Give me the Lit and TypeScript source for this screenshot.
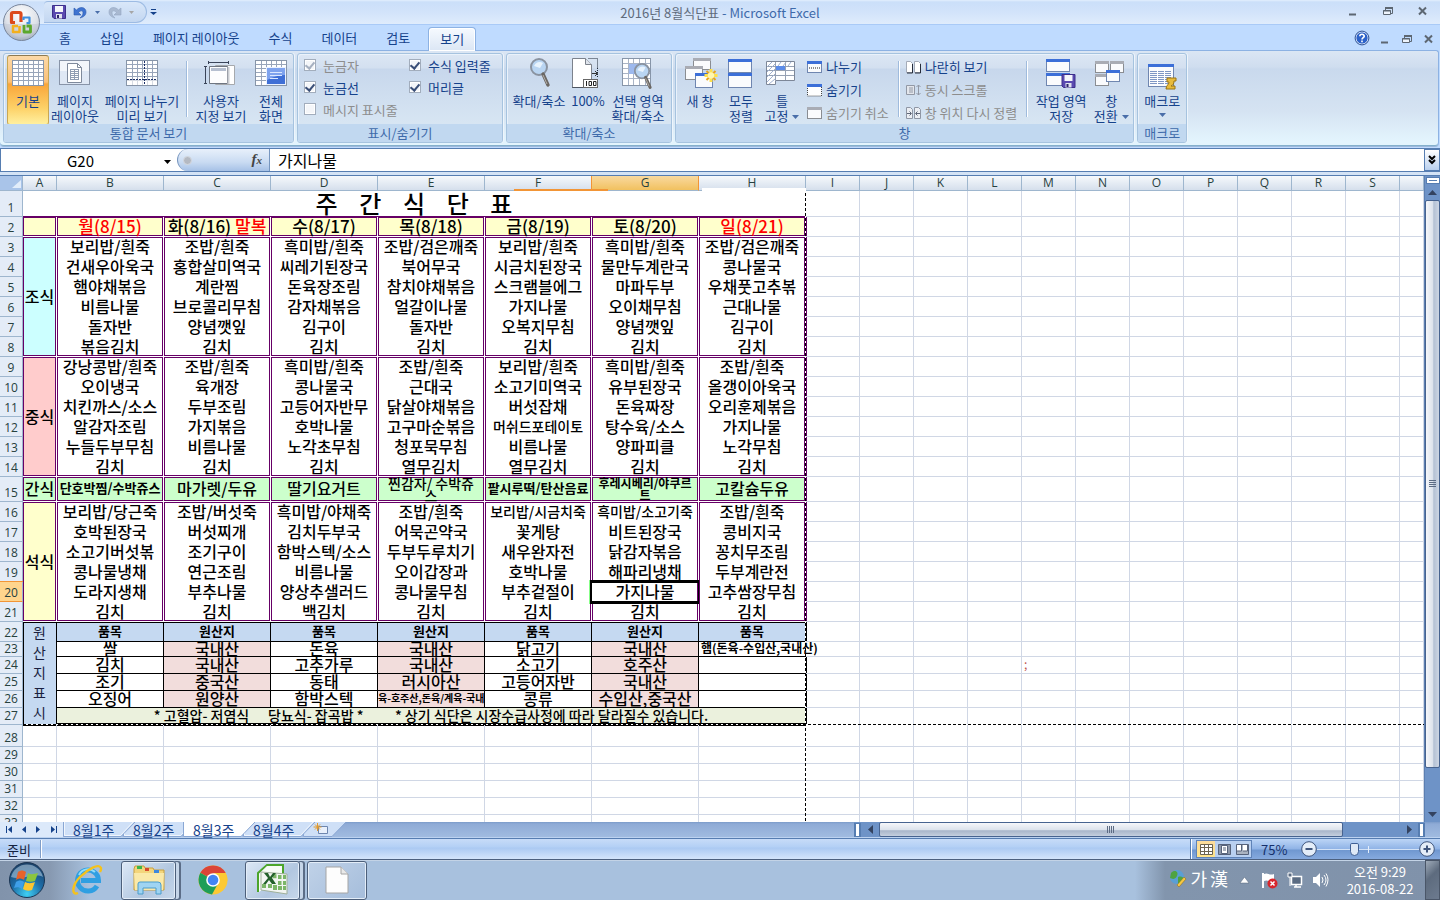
import { LitElement, html, svg, css, nothing, TemplateResult } from "lit";
import { customElement } from "lit/decorators.js";
import { classMap } from "lit/directives/class-map.js";

type Cell = { t: string; c?: string };

const HEAD_ROW: Cell[] = [
  { t: "월(8/15)", c: "red" }, { t: "화(8/16)" }, { t: "수(8/17)" }, { t: "목(8/18)" },
  { t: "금(8/19)" }, { t: "토(8/20)" }, { t: "일(8/21)", c: "red" },
];

const MEALS: { label: string; tone: string; first: number; rows: (string | Cell)[][] }[] = [
  {
    label: "조식", tone: "cyan", first: 3, rows: [
      ["보리밥/흰죽", "조밥/흰죽", "흑미밥/흰죽", "조밥/검은깨죽", "보리밥/흰죽", "흑미밥/흰죽", "조밥/검은깨죽"],
      ["건새우아욱국", "홍합살미역국", "씨레기된장국", "북어무국", "시금치된장국", "물만두계란국", "콩나물국"],
      ["햄야채볶음", "계란찜", "돈육장조림", "참치야채볶음", "스크램블에그", "마파두부", "우채풋고추볶"],
      ["비름나물", "브로콜리무침", "감자채볶음", "얼갈이나물", "가지나물", "오이채무침", "근대나물"],
      ["돌자반", "양념깻잎", "김구이", "돌자반", "오복지무침", "양념깻잎", "김구이"],
      ["볶음김치", "김치", "김치", "김치", "김치", "김치", "김치"],
    ],
  },
  {
    label: "중식", tone: "pink", first: 9, rows: [
      ["강낭콩밥/흰죽", "조밥/흰죽", "흑미밥/흰죽", "조밥/흰죽", "보리밥/흰죽", "흑미밥/흰죽", "조밥/흰죽"],
      ["오이냉국", "육개장", "콩나물국", "근대국", "소고기미역국", "유부된장국", "올갱이아욱국"],
      ["치킨까스/소스", "두부조림", "고등어자반무", "닭살야채볶음", "버섯잡채", "돈육짜장", "오리훈제볶음"],
      ["알감자조림", "가지볶음", "호박나물", "고구마순볶음", { t: "머쉬드포테이토", c: "s14" }, "탕수육/소스", "가지나물"],
      ["누들두부무침", "비름나물", "노각초무침", "청포묵무침", "비름나물", "양파피클", "노각무침"],
      ["김치", "김치", "김치", "열무김치", "열무김치", "김치", "김치"],
    ],
  },
  {
    label: "간식", tone: "green", first: 15, rows: [
      [{ t: "단호박찜/수박쥬스", c: "s13 bold" }, "마가렛/두유", "딸기요거트", { t: "찐감자/ 수박쥬스", c: "s14 two" },
        { t: "팥시루떡/탄산음료", c: "s13 bold" }, { t: "후레시베리/야쿠르트", c: "s12 bold two" }, "고칼슘두유"],
    ],
  },
  {
    label: "석식", tone: "yellow", first: 16, rows: [
      ["보리밥/당근죽", "조밥/버섯죽", "흑미밥/야채죽", "조밥/흰죽", { t: "보리밥/시금치죽", c: "s14" }, { t: "흑미밥/소고기죽", c: "s14" }, "조밥/흰죽"],
      ["호박된장국", "버섯찌개", "김치두부국", "어묵곤약국", "꽃게탕", "비트된장국", "콩비지국"],
      ["소고기버섯볶", "조기구이", "함박스텍/소스", "두부두루치기", "새우완자전", "닭감자볶음", "꽁치무조림"],
      ["콩나물냉채", "연근조림", "비름나물", "오이갑장과", "호박나물", "해파리냉채", "두부계란전"],
      ["도라지생채", "부추나물", "양상추샐러드", "콩나물무침", "부추겉절이", "가지나물", "고추쌈장무침"],
      ["김치", "김치", "백김치", "김치", "김치", "김치", "김치"],
    ],
  },
];

const ORIGINS: (string | Cell)[][] = [
  ["품목", "원산지", "품목", "원산지", "품목", "원산지", "품목"],
  ["쌀", "국내산", "돈육", "국내산", "닭고기", "국내산", { t: "햄(돈육-수입산,국내산)", c: "s12 bold spill" }],
  ["김치", "국내산", "고추가루", "국내산", "소고기", "호주산", ""],
  ["조기", "중국산", "동태", "러시아산", "고등어자반", "국내산", ""],
  ["오징어", "원양산", "함박스텍", { t: "육-호주산,돈육/계육-국내", c: "s10 bold" }, "콩류", "수입산,중국산", ""],
];

const tri = (c = "#4a6ea9") => html`<svg class="tri" width="7" height="4" viewBox="0 0 7 4"><path d="M0 0h7L3.5 4z" fill=${c} /></svg>`;

const lines = (xs: number[], ys: number[], x0: number, x1: number, y0: number, y1: number, c: string) =>
  svg`<path d=${xs.map((x) => `M${x} ${y0}V${y1}`).join("") + ys.map((y) => `M${x0} ${y}H${x1}`).join("")} stroke=${c} fill="none"/>`;

const gridPic = svg`<rect x=".5" y="2.5" width="31" height="25" fill="#fff" stroke="#8795a8"/>
  ${lines([6.5, 11.5, 16.5, 21.5, 26.5], [6.5, 10.5, 14.5, 18.5, 22.5], 1, 31, 3, 27, "#98a5ba")}`;
const win = (x: number, y: number, w: number, h: number, blue = true) => svg`
  <rect x=${x + 0.5} y=${y + 0.5} width=${w} height=${h} fill="#fafbfd" stroke=${blue ? "#6f86b0" : "#8a8d92"}/>
  <path d=${`M${x} ${y + 1.5}h${w + 1}`} stroke=${blue ? "#3c6fd8" : "#a9acb4"} stroke-width="3"/>`;
const lens = svg`<circle cx="10" cy="9" r="8" fill="#b9d5f2" stroke="#8a93a0" stroke-width="2"/>
  <path d="M5 8a6 6 0 0 1 9-3l-3 5z" fill="#e8f3fd"/><path d="M14 16l5 11" stroke="#6b6763" stroke-width="3.4" stroke-linecap="round"/><path d="M14 17l4 9" stroke="#b3aea8" stroke-width="1"/>`;
const floppy = svg`<path d="M.5 .5h13v13H2L.5 12z" fill="#5a4ab0" stroke="#3d2f8c"/><path d="M3 1h8v6H3z" fill="#f4f6fb"/><path d="M4 9h6v4.5H4z" fill="#dfe3ee"/><path d="M5 10h2v3H5z" fill="#2b2568"/>`;

const BIG: Record<string, TemplateResult> = {
  normal: svg`${gridPic}`,
  layout: svg`<rect x=".5" y="2.5" width="30" height="24" fill="#dfe8f5" stroke="#8894a8"/><path d="M1 3h29v10H1z" fill="#f3f6fb"/>
    <path d="M8.5 5.5h10l4 4v15h-14z" fill="#fff" stroke="#7f8a9c"/><path d="M18.5 5.5v4h4" fill="none" stroke="#7f8a9c"/>
    ${lines([11.5, 15.5, 19.5], [11.5, 13.5, 15.5, 17.5, 19.5, 21.5], 11, 20, 11, 22, "#8f9cb2")}`,
  breaks: svg`${gridPic}<rect x="1" y="22" width="30" height="5" fill="#fff" fill-opacity=".6"/><path d="M18.5 3v24" stroke="#1b2f66" stroke-dasharray="2 1"/><path d="M1 21.5h30" stroke="#1b2f66" stroke-dasharray="2 1"/>`,
  custom: svg`<path d="M10.5 7.5h19v19h-19z" fill="#fff" stroke="#a6a9ad"/><path d="M4.5 8.5h18v17h-18z" fill="#fdfdfe" stroke="#6e7581"/><path d="M6 10h15v3H6z" fill="#b6bfd0"/>
    <path d="M3 4.5h21M3.5 3v3M23.5 3v3M.5 8v17M-1 8.5h3M-1 25.5h3" stroke="#3a4459"/><path d="M23.5 26V9" stroke="#c9ccd1" stroke-width="2"/>`,
  full: svg`${gridPic}<rect x="11.5" y="9.5" width="19" height="17" fill="#3f6fd6" stroke="#e9f1ff"/><path d="M12 10h18v7c-7 0-12 2-18 5z" fill="#7fa3ee"/><path d="M15 14.5h12M15 17.5h12M15 20.5h8" stroke="#dce8ff"/>`,
  zoom: svg`<g transform="translate(6,0)">${lens}</g>`,
  hundred: svg`<path d="M16.5 .5h9v10" fill="none" stroke="#1f2937" stroke-dasharray="1 1"/><path d="M.5 .5h13l6 6v23H.5z" fill="#fff" stroke="#7c828c"/><path d="M13.5 .5v6h6" fill="#dfe4ec" stroke="#7c828c"/>
    <path d="M.5 29.5h12M25.5 10v10" stroke="#1f2937" stroke-dasharray="1 1"/><path d="M20 15.5h5M23 13l2.5 2.5L23 18" stroke="#333" fill="none"/><rect x="11.5" y="21.5" width="14" height="8" fill="#fff" stroke="#666"/>
    <path d="M14.5 23v5M17 23.5h2.5v4H17zM21.5 23.5H24v4h-2.5z" fill="none" stroke="#222"/>`,
  zoomsel: svg`<rect x=".5" y=".5" width="28" height="27" fill="#fff" stroke="#8795a8"/>${lines([6.5, 11.5, 17.5, 23.5], [5.5, 10.5, 15.5, 20.5], 1, 28, 1, 27, "#a9b4c6")}
    <rect x="7" y="6" width="10" height="10" fill="#9db9ee"/><g transform="translate(11,5) scale(.9)">${lens}</g>`,
  newwin: svg`${win(9, 0, 17, 11, false)}${win(1, 8, 17, 13, false)}${win(11, 15, 17, 14)}
    <path d="M27 11v13M20.5 17.5h13" stroke="#ffe14a" stroke-width="3"/><path d="M22.500 13l9 9M31.500 13l-9 9" stroke="#eaa51a" stroke-width="2"/><circle cx="27" cy="17.5" r="3.200" fill="#fff6b0"/>`,
  arrange: svg`${win(3, 1, 23, 13)}${win(3, 15, 23, 14)}`,
  freeze: svg`<path d="M.5 3.5h28v19h-19v4h-9z" fill="#fff" stroke="#7d8798"/>${lines([9.5, 19.5], [8.5, 12.5, 17.5], 1, 28, 4, 22, "#96a1b3")}
    <path d="M1 9l5-5M1 14L9 6M1 19l8-8M1 24l8-8M3 26l6-5M12 8l3-4M17 8l3-4M22 8l3-4" stroke="#9fb0cf"/><rect x="10" y="8" width="9" height="4" fill="#5b8be8"/>`,
  savews: svg`${win(1, 1, 23, 12)}${win(1, 15, 23, 12)}<g transform="translate(16.5,16)">${floppy}</g>`,
  switchw: svg`${win(0, 3, 13, 11, false)}${win(15, 3, 13, 11, false)}${win(0, 16, 13, 11, false)}${win(11, 12, 13, 11)}`,
  macro: svg`<g transform="translate(0,5)">${win(2, 1, 25, 22)}${lines([], [8.5, 10.5, 12.5, 14.5, 16.5, 18.5, 20.5], 4, 25, 0, 0, "#7e96c4")}<path d="M11.5 6v16M18.5 6v16" stroke="#fff"/>
    <path d="M21 15h9v3h-2c0 3-1 4-3 5h4v3h-9c0-4 3-4 3-7h-2z" fill="#e8bb3c" stroke="#9a7413"/></g>`,
};

const SMALL: Record<string, TemplateResult> = {
  split: svg`${win(0, 2, 14, 11)}<path d="M2 9h12" stroke="#222" stroke-dasharray="1 1"/>`,
  hide: svg`<path d="M.5 2v12h14V2" fill="#fff" stroke="#444" stroke-dasharray="1 1"/><path d="M0 3.5h15" stroke="#3c6fd8" stroke-width="3"/>`,
  unhide: svg`${win(0, 2, 14, 11, false)}`,
  side: svg`<path d="M.5 2.5h4l2 2v9h-6zM8.5 2.5h4l2 2v9h-6z" fill="#fff" stroke="#a4abb8"/><path d="M6.5 5v9H1M14.5 5v9H9" fill="none" stroke="#262c3a"/>`,
  sync: svg`<path d="M.5 3.5h8v9h-8zM3 6h4M3 8h4M3 10h4" fill="#e3e6ec" stroke="#9298a5"/><path d="M12.5 3v10M10.5 5l2-2 2 2M10.5 11l2 2 2-2" fill="none" stroke="#9298a5"/>`,
  reset: svg`<path d="M.5 2.5h4l2 2v9h-6zM8.5 2.5h4l2 2v9h-6z" fill="#eceff4" stroke="#8f96a4"/><path d="M1 8.5h4M3.5 6.5l2 2-2 2M14 8.5h-4M11.5 6.5l-2 2 2 2" stroke="#5f6778" fill="none"/>`,
};

const winBtns = (cls: string) => html`<div class="winbtns ${cls}">
  <button aria-label="최소화"><svg width="14" height="12"><path d="M3 9.5h7" stroke="#5d6772" stroke-width="2" /></svg></button>
  <button aria-label="이전 크기로"><svg width="14" height="12"><path d="M4.5 5V3.5h7v5H10" fill="none" stroke="#5d6772" /><path d="M4 3h8" stroke="#5d6772" stroke-width="2" /><path d="M2.5 5.5h7v4h-7z" fill="#eef4fc" stroke="#5d6772" /><path d="M2 6h8" stroke="#5d6772" /></svg></button>
  <button aria-label="닫기"><svg width="14" height="12"><path d="M3 2.5l7 7M10 2.5l-7 7" stroke="#5d6772" stroke-width="2" /></svg></button>
</div>`;

@customElement("app-root")
export class AppRoot extends LitElement {
  static styles = css`
    :host { display: flex; flex-direction: column; height: 100vh; overflow: hidden; font: 13px/15px "Noto Sans CJK KR", sans-serif; color: #15428b; background: #bfdbff; }
    * { box-sizing: border-box; }
    button, input { font: inherit; color: inherit; border: 0; background: none; padding: 0; margin: 0; border-radius: 0; outline: 0; }
    svg { display: block; flex: none; overflow: visible; }

    .title { position: relative; height: 25px; flex: none; display: flex; align-items: center; background: linear-gradient(#e3effd 0, #cbdff9 2px, #d2e3fa 12px, #dfecfc); border-bottom: 1px solid #a9caf7; }
    .orb { position: absolute; z-index: 3; left: 3px; top: 4px; width: 38px; height: 38px; }
    .qat { display: flex; align-items: center; height: 22px; margin-left: 44px; padding: 0 12px 0 8px; gap: 8px; border: 1px solid #9dbbe3; border-left: 0; border-radius: 4px 11px 11px 0; background: linear-gradient(#d9e7f9, #c3d7f1); }
    .custom { margin-left: 3px; }
    .caption { position: absolute; left: 0; right: 0; pointer-events: none; text-align: center; color: #3e6aaa; }
    .caption .doc { color: #5f6b7c; }
    .winbtns { display: flex; }
    .winbtns.outer { gap: 21px; padding: 0 10px 2px 0; margin-left: auto; }
    .winbtns.inner { gap: 8px; padding: 2px 4px 0 0; }

    .tabs { display: flex; flex: none; height: 25px; padding-left: 47px; gap: 5px; align-items: stretch; background: #bfdbff; }
    .tab { padding: 0 12px; }
    .tab.on { margin: 2px 0 0 1px; height: 24px; border: 1px solid #8db2e3; border-bottom: 0; padding: 0 11px 2px; border-radius: 4px 4px 0 0; background: linear-gradient(#f6faff, #dbe6f4); position: relative; z-index: 1; box-shadow: inset 0 0 0 1px #fff; }
    .right { margin-left: auto; display: flex; align-items: center; gap: 9px; }

    .ribbon { flex: none; display: flex; gap: 3px; height: 96px; margin-right: 1px; margin-bottom: 2px; padding: 2px 3px; border: 1px solid #8db2e3; border-bottom-color: #84b0cc; border-left: 0; border-radius: 0 3px 4px 4px; background: linear-gradient(#dbe6f4 0, #cfddef 16px, #c9d9ed 18px, #d5e3f2 60px, #e3f4fd 90px); box-shadow: 0 1px #9db9db; }
    .group { display: flex; flex-direction: column; border: 1px solid #a6c3df; border-radius: 3px; box-shadow: inset 1px 1px #eaf2fb, 1px 0 #eef5fc; overflow: hidden; background: linear-gradient(#dce7f4 0, #d3e0f0 14px, #c7d7ec 15px, #d8e6f3 72px); }
    .body { flex: 1; display: flex; gap: 1px; padding: 1px 3px 0; min-height: 0; }
    .gl { height: 18px; line-height: 17px; text-align: center; background: #c1d8f0; color: #3e6aaa; }
    .big { display: flex; flex-direction: column; align-items: center; white-space: nowrap; border: 1px solid transparent; border-radius: 3px; padding-top: 2px; height: 70px; }
    .big .ic { margin-bottom: 3px; }
    .big.on { border-color: #8e7a51 #c9a753 #e9c653; background: linear-gradient(#fcd9a8 0, #fbc076 26px, #f9a53a 28px, #fdd167 52px, #fff0a0); }
    .w38 { width: 38px; } .w42 { width: 42px; } .w50 { width: 50px; } .w58 { width: 58px; } .w60 { width: 60px; } .w82 { width: 82px; }
    .sep { width: 2px; height: 56px; margin: 6px 2px 0; background: #9fbbdd; border-right: 1px solid #fff; }
    .tri { display: inline-block; margin-left: 4px; vertical-align: 2px; }
    .tri.alone { margin: 0; }
    .checks { display: grid; gap: 0; grid-template-columns: 105px 90px; grid-auto-rows: 22px; padding: 0 3px 0 6px; align-content: start; }
    .chk { display: flex; align-items: center; gap: 7px; white-space: nowrap; height: 22px; }
    .chk.off { color: #8d8d8d; }
    .chk input { appearance: none; width: 12px; height: 12px; margin: 0; border: 1px solid #a2adbc; background: #f4f6f9; box-shadow: inset 0 0 0 1px #fff; display: grid; place-items: center; }
    .chk input:checked::before { content: ""; width: 4px; height: 7px; border: solid #3a4f78; border-width: 0 2px 2px 0; transform: translateY(-1px) rotate(40deg); }
    .chk.off input:checked::before { border-color: #a6b0c0; }
    .list { display: flex; flex-direction: column; }
    .list button { display: flex; align-items: center; gap: 3px; height: 23px; padding: 0 6px 0 3px; white-space: nowrap; }
    .list button.off { color: #8d8d8d; }

    .fbar { flex: none; display: flex; height: 24px; border-top: 1px solid #567db1; border-bottom: 1px solid #567db1; background: #fff; color: #000; }
    .namebox { display: flex; align-items: center; width: 177px; border-left: 1px solid #567db1; }
    .namebox input { flex: 1; min-width: 0; text-align: center; font-size: 15px; }
    .namebox button { padding-right: 6px; }
    .fx { width: 93px; display: flex; align-items: center; justify-content: space-between; padding: 0 7px 0 5px; border: 1px solid #7796bf; border-width: 0 1px 0 1px; border-radius: 12px 0 0 12px; background: linear-gradient(#e8f0fb, #c9dbf2 60%, #a6c1e6); font: italic bold 15px/15px "Liberation Serif", serif; color: #444; }
    .fx i { font-size: 11px; }
    .dot { width: 9px; height: 9px; border-radius: 50%; background: #b4b9c2; border: 1px solid #d5d9e0; }
    .fbar .formula { flex: 1; font-size: 16px; padding-left: 8px; }
    .fbar .expand { width: 16px; display: grid; place-items: center; border: 1px solid #567db1; background: linear-gradient(#fff, #b9d0ee); }
    .strip { height: 4px; flex: none; background: #d4e3f5; border-bottom: 1px solid #567db1; }

    .work { flex: 1; min-height: 0; display: flex; background: #fff; }
    .sheet { flex: 1; min-width: 0; position: relative; overflow: hidden; color: #000; }
    table { width: 100%; table-layout: fixed; border-collapse: separate; border-spacing: 0; }
    .c0 { width: 23px; } .c1 { width: 34px; } .cw { width: 107px; } .cn { width: 54px; }
    th { font: 12px/14px "Open Sans", sans-serif; color: #27413e; padding: 0; }
    thead th { height: 15px; background: linear-gradient(#f6f9fc, #d5dfec); border-right: 1px solid #9eb6ce; border-bottom: 1px solid #9eb6ce; position: relative; }
    thead th.corner { background: #a9c4e9; }
    thead th.corner svg { margin: 2px 1px 0 auto; }
    thead th.on { background: linear-gradient(#f9d99f, #f1c15f); border-right-color: #f29536; box-shadow: -1px 0 #f29536; }
    thead th.bar::after { content: ""; position: absolute; left: 29px; right: -17px; bottom: -1px; height: 2px; background: #f29536; z-index: 1; }
    thead th.wipe::after { content: ""; position: absolute; left: 3px; right: -3px; bottom: -1px; height: 3px; background: #fff; }
    tbody th { vertical-align: bottom; background: #e4ecf7; border-right: 1px solid #9eb6ce; border-bottom: 1px solid #9eb6ce; line-height: 16px; }
    tbody th.on { background: #ffd58d; border-bottom-color: #f29536; box-shadow: 0 -1px #f29536; }
    .h26 { height: 26px; } .h20 { height: 20px; } .h25 { height: 25px; } .h15 { height: 15px; } .h17 { height: 17px; } .h22 { height: 22px; }
    .h15 th { line-height: 14px; }
    td { padding: 0 0 2px; border-right: 1px solid #d0d7e5; border-bottom: 1px solid #d0d7e5; text-align: center; vertical-align: middle; white-space: nowrap; line-height: 12px; font-size: 16px; font-weight: 500; }
    td.name { font-size: 24px; line-height: 22px; white-space: pre; border-color: #fff; border-bottom-color: #606; }
    td.day { font-size: 17px; background: #ffc; background-clip: padding-box; border-color: #fff; box-shadow: inset 0 0 0 1px #606; }
    td.m { border-color: #fff; border-bottom-width: 0; box-shadow: inset 1px 0 #606, inset -1px 0 #606; }
    td.m.last { border-bottom-width: 1px; box-shadow: inset 1px 0 #606, inset -1px 0 #606, inset 0 -1px #606; }
    td.m.first { box-shadow: inset 1px 0 #606, inset -1px 0 #606, inset 0 1px #606; }
    td.m.first.last, td.side { box-shadow: inset 0 0 0 1px #606; }
    td.side { border-color: #fff; background-clip: padding-box; }
    td.edge { box-shadow: inset 1px 0 #606; }
    td.edgek { box-shadow: inset 1px 0 #000; }
    td.cyan { background-color: #cff; } td.pink { background-color: #fcc; } td.green { background-color: #cfc; } td.yellow { background-color: #ffc; }
    td.green.m { background-clip: padding-box; }
    .red { color: #f00; }
    td.o { border-color: #000; }
    td.o.tint { background: #f2dddc; }
    td.o.oh { background: #c5d9f1; font-size: 13px; font-weight: 700; box-shadow: inset 0 1px #000; }
    td.os { background: #c5d9f1; border-color: #000; box-shadow: inset 1px 1px #000; font-weight: 400; font-size: 14px; line-height: 20px; color: #1a1f40; }
    td.note { background: #ebf1dd; border-color: #000; font-size: 14px; white-space: pre; }
    td.s14 { font-size: 14px; } td.s13 { font-size: 13px; } td.s12 { font-size: 12px; } td.s10 { font-size: 10px; }
    td.bold { font-weight: 700; }
    td.s10 { overflow: hidden; }
    td.two { white-space: normal; word-break: break-all; padding: 0 6px; }
    td.two.s14 { padding: 0 4px; }
    td.spill { border-right: 0; position: relative; z-index: 2; text-align: left; padding-left: 2px; }
    td.cur { position: relative; }
    td.cur::after { content: ""; position: absolute; inset: -2px -1px -2px -2px; border: 3px solid #000; border-width: 3px 1px 3px 2px; box-shadow: inset 1px 0 #fff, -1px 0 #8f8; }
    td.cap { box-shadow: inset 0 1px #000; }
    .pv, .ph { position: absolute; pointer-events: none; }
    .pv { left: 805px; top: 17px; bottom: 0; width: 1px; background: repeating-linear-gradient(#000 0 3px, #fff 3px 5px); }
    .ph { top: 548px; left: 23px; right: 0; height: 1px; background: repeating-linear-gradient(90deg, #000 0 3px, #fff 3px 5px); }
    td.thick { box-shadow: inset 0 -1px #000; }
    td.semi { text-align: left; padding-left: 2px; color: #c0504d; font-size: 12px; font-weight: 400; }

    .vs { width: 16px; flex: none; display: flex; flex-direction: column; align-items: center; background: #6e93c7; border-left: 1px solid #5c7fb1; }
    .split { height: 7px; width: 14px; margin: 1px 0; background: #fff; border: 1px solid #567db1; display: grid; place-items: center; }
    .split::after { content: ""; width: 8px; height: 1px; background: #567db1; }
    .vs button { height: 15px; }
    .vt { width: 15px; flex: none; height: 88%; border: 1px solid #47638f; border-radius: 2px; background: linear-gradient(90deg, #f6f7fa, #dde3ec 50%, #b4c1d4 60%, #cdd6e4); display: grid; place-items: center; }
    .grow { flex: 1; }

    .sheets { flex: none; height: 16px; display: flex; background: linear-gradient(#7c9cc9 0, #8fabd6 2px, #a0bbe0); border-bottom: 1px solid #bcd2f0; }
    .nav { width: 63px; display: flex; justify-content: space-around; align-items: center; background: #dce9fa; padding: 0 1px; }
    .st { position: relative; width: 60px; height: 15px; text-align: left; font-size: 14px; line-height: 12px; z-index: 2; }
    .st span { position: relative; padding-left: 10px; }
    .st svg { position: absolute; left: 0; top: 0; }
    .st.z4 { z-index: 5; } .st.z3 { z-index: 4; } .st.on { z-index: 6; }
    .st.new { width: 34px; z-index: 1; }
    .hs { width: 571px; display: flex; align-items: center; background: #6e93c7; margin-right: 15px; }
    .hsplit { width: 7px; height: 14px; background: #fff; border: 1px solid #567db1; border-width: 1px 2px; }
    .hs button { width: 18px; display: grid; place-items: center; }
    .ht { flex: 0 0 464px; height: 15px; border: 1px solid #47638f; border-radius: 2px; background: linear-gradient(#f6f7fa, #dde3ec 50%, #a9b6ca 60%, #c5cfde); display: grid; place-items: center; }

    .status { flex: none; height: 22px; display: flex; align-items: center; background: linear-gradient(#c7dcf8 0, #b3d0f5 8px, #abc9f2 9px, #d4e5fb 20px); border-top: 1px solid #567db1; border-bottom: 1px solid #4c607f; padding-left: 7px; color: #15233f; }
    .status .bar { width: 2px; height: 18px; background: #7f9dc8; border-right: 1px solid #fff; margin-left: 9px; }
    .sr { display: flex; align-items: center; height: 100%; padding: 0 5px 0 5px; border-left: 1px solid #567db1; box-shadow: inset 1px 0 #fff; background: linear-gradient(#bcd5f6, #8fb3e6 50%, #6f97d0 55%, #86aade); color: #15306b; }
    .views { display: flex; border: 1px solid #5f83b8; height: 18px; background: #b9d0f0; margin-right: 9px; }
    .views button { width: 18px; display: grid; place-items: center; }
    .views button.on { background: linear-gradient(#fbdb9c, #ffe48a); }
    .pct { width: 40px; }
    .sr input { appearance: none; width: 102px; height: 17px; background: linear-gradient(#e4eefb, #e4eefb) 51px center / 1px 7px no-repeat, linear-gradient(#d3e2f6, #d3e2f6) center / 100% 1px no-repeat; }
    .sr input::-webkit-slider-thumb { appearance: none; width: 9px; height: 13px; background: #dfe9f6; border: 1px solid #3f5f94; border-radius: 2px 2px 5px 5px; }

    .task { flex: none; height: 40px; display: flex; align-items: center; background: linear-gradient(90deg, #8193ab 0, #8799b1 50px, #a8c1de 90px, #a8c1de calc(100% - 305px), #8295ad calc(100% - 275px), #8092aa); box-shadow: inset 0 1px #c3d3e6; color: #fff; }
    .task button { height: 39px; display: grid; place-items: center; }
    .start { width: 53px; } .ie { width: 68px; } .chrome { width: 65px; }
    .task .app { width: 55px; border: 1px solid #4c5f7a; border-radius: 3px; background: linear-gradient(135deg, #dce8f6, #b2c7e0 60%, #c6d7ea); box-shadow: inset 0 0 0 1px #e3edf8; }
    .task .app.stack { box-shadow: inset 0 0 0 1px #e3edf8, 4px 0 0 -1px #c5d5e8, 5px 0 #5b6d87; margin-right: 4px; }
    .task .app.doc { width: 60px; margin-left: 3px; background: linear-gradient(135deg, #c0d2e8, #a5bddb); }
    .tray { margin-left: auto; display: flex; align-items: center; height: 100%; }
    .ime { font-size: 18px; display: flex; gap: 3px; align-items: center; margin-right: 12px; padding-bottom: 4px; }
    .icons { display: flex; align-items: center; gap: 9px; margin-right: 17px; }
    .icons .flag { margin-left: 3px; }
    .clock { text-align: center; line-height: 17px; width: 70px; margin-right: 10px; }
    .task .peek { width: 15px; height: 40px; border: 1px solid #4a5668; background: linear-gradient(135deg, #9fabb9, #5d6b7e 40%, #6d7b8f); }
  `;

  private big(label: string[], ic: string, w: string, o: { on?: boolean; arrow?: boolean; alone?: boolean } = {}) {
    return html`<button class=${classMap({ big: true, on: !!o.on, [w]: true })}>
      <svg class="ic" width="32" height="32" viewBox="0 0 32 32">${BIG[ic]}</svg>
      ${label.map((l, i) => html`<span>${l}${o.arrow && i === label.length - 1 ? tri() : nothing}</span>`)}
      ${o.alone ? html`<svg width="7" height="14" viewBox="0 0 7 14"><path d="M0 5h7L3.5 9z" fill="#4a6ea9" /></svg>` : nothing}
    </button>`;
  }

  private small(label: string, ic: string, off = false) {
    return html`<button class=${classMap({ off })}><svg width="16" height="16" viewBox="0 0 16 16">${SMALL[ic]}</svg>${label}</button>`;
  }

  private check(label: string, on: boolean, off = false) {
    return html`<label class=${classMap({ chk: true, off })}><input type="checkbox" .checked=${on} ?disabled=${off} />${label}</label>`;
  }

  private rest(edge = "", row = 0) {
    return Array.from({ length: 12 }, (_, i) => {
      const semi = row === 24 && i === 4;
      return html`<td class=${i === 0 ? edge : semi ? "semi" : ""}>${semi ? ";" : nothing}</td>`;
    });
  }

  private mealRows() {
    return MEALS.map((meal) => meal.rows.map((cells, i) => {
      const r = meal.first + i;
      const first = i === 0, last = i === meal.rows.length - 1;
      return html`<tr class=${meal.rows.length === 1 ? "h25" : "h20"}>
        <th scope="row" class=${r === 20 ? "on" : ""}>${r}</th>
        ${first ? html`<td class="side ${meal.tone}" rowspan=${meal.rows.length}>${meal.label}</td>` : nothing}
        ${cells.map((c, k) => {
          const cell = typeof c === "string" ? { t: c, c: "" } : c;
          return html`<td class="m ${first ? "first" : ""} ${last ? "last" : ""} ${meal.rows.length === 1 ? "green" : ""} ${cell.c ?? ""} ${r === 20 && k === 5 ? "cur" : ""}">${cell.t}</td>`;
        })}
        ${this.rest("edge")}
      </tr>`;
    }));
  }

  private originRows() {
    const h = ["h20", "h15", "h17", "h17", "h17"];
    return ORIGINS.map((cells, i) => html`<tr class=${h[i]}>
      <th scope="row">${22 + i}</th>
      ${i === 0 ? html`<td class="os" rowspan="6">원<br />산<br />지<br />표<br />시</td>` : nothing}
      ${cells.map((c, k) => {
        const cell = typeof c === "string" ? { t: c, c: "" } : c;
        return html`<td class="o ${i === 0 ? "oh" : k % 2 ? "tint" : ""} ${cell.c ?? ""}">${cell.t}</td>`;
      })}
      ${this.rest(i === 1 ? "" : "edgek", 22 + i)}
    </tr>`);
  }

  render() {
    const names = "ABCDEFGHIJKLMNOPQRS".split("");
    const tabShape = (fill: string) => html`<svg width="73" height="15" viewBox="0 0 73 15"><path d="M.5 0V14.5H58L72 0" fill=${fill} stroke="#8aa7d4" /><path d="M1.5 0v13.5H57.5L70 0" fill="none" stroke="#fff" stroke-opacity=".7" /></svg>`;
    return html`
      <header class="title">
        <button class="orb" aria-label="Office 단추"><svg width="38" height="38" viewBox="0 0 38 38">
          <defs><radialGradient id="o" cx=".5" cy=".3" r=".75"><stop offset="0" stop-color="#fff" /><stop offset=".6" stop-color="#dde1e8" /><stop offset="1" stop-color="#9aa5b6" /></radialGradient></defs>
          <circle cx="18.5" cy="18.5" r="18" fill="url(#o)" stroke="#77859c" /><path d="M2 20a17 17 0 0 0 33 0z" fill="#c4cad6" opacity=".6" />
          <g fill="none" stroke-linejoin="round"><path d="M12 18.500H8.500V10Q8.500 8.500 10 8.500h6.500q1.500 0 1.500 1.500v8" stroke="#dc4a1c" stroke-width="3.200" /><path d="M20.500 16v-2.500h6v5.500h-3" stroke="#3d8fe0" stroke-width="2.200" /><path d="M15 22h-5v6h6.500v-6" stroke="#f3b01c" stroke-width="2.500" /><path d="M21 21v7h6.500v-6h-4" stroke="#5ba82c" stroke-width="2.800" /></g>
        </svg></button>
        <div class="qat">
          <button aria-label="저장"><svg width="14" height="14" viewBox="0 0 14 14">${floppy}</svg></button>
          <button aria-label="실행 취소"><svg width="13" height="13" viewBox="0 0 13 13"><path d="M0 2v7h7L4.5 6.5C7 4 9 4.5 9 7s-2 4-3 5c4-1 6-3 6-6 0-5-6-6-9.5-2z" fill="#3f74d1" stroke="#2a57ad" stroke-width=".6" /></svg></button>
          <svg width="5" height="3"><path d="M0 0h5L2.5 3z" fill="#4a6ea9" /></svg>
          <button aria-label="다시 실행"><svg width="13" height="13" viewBox="0 0 13 13"><path d="M13 2v7H6l2.5-2.5C6 4 4 4.5 4 7s2 4 3 5C3 11 1 9 1 6c0-5 6-6 9.5-2z" fill="#a9b9d1" stroke="#94a6c2" stroke-width=".6" /></svg></button>
          <svg width="5" height="3"><path d="M0 0h5L2.5 3z" fill="#a6a6a6" /></svg>
        </div>
        <button class="custom" aria-label="빠른 실행 도구 모음 사용자 지정"><svg width="7" height="8"><path d="M1 1.5h5" stroke="#15428b" /><path d="M0 4h7L3.5 7z" fill="#15428b" /></svg></button>
        <div class="caption"><span class="doc">2016년 8월식단표</span> - Microsoft Excel</div>
        ${winBtns("outer")}
      </header>
      <nav class="tabs">
        ${["홈", "삽입", "페이지 레이아웃", "수식", "데이터", "검토", "보기"].map((t) => html`<button class=${classMap({ tab: true, on: t === "보기" })}>${t}</button>`)}
        <div class="right"><button aria-label="도움말"><svg width="14" height="14"><circle cx="7" cy="7" r="6.2" fill="#2c62c9" stroke="#fff" /><circle cx="7" cy="7" r="6.9" fill="none" stroke="#2a4f94" /><path d="M4.8 5.3c0-3 4.6-2.6 4.4 0C9 6.6 7 6.8 7 8.5M7 9.6v1.6" stroke="#fff" stroke-width="1.6" fill="none" /></svg></button>${winBtns("inner")}</div>
      </nav>
      <section class="ribbon">
        <div class="group"><div class="body">
          ${this.big(["기본"], "normal", "w42", { on: true })}${this.big(["페이지", "레이아웃"], "layout", "w50")}${this.big(["페이지 나누기", "미리 보기"], "breaks", "w82")}
          <span class="sep"></span>${this.big(["사용자", "지정 보기"], "custom", "w60")}${this.big(["전체", "화면"], "full", "w38")}
        </div><div class="gl">통합 문서 보기</div></div>
        <div class="group"><div class="body checks">
          ${this.check("눈금자", true, true)}${this.check("수식 입력줄", true)}${this.check("눈금선", true)}${this.check("머리글", true)}${this.check("메시지 표시줄", false, true)}
        </div><div class="gl">표시/숨기기</div></div>
        <div class="group"><div class="body">
          ${this.big(["확대/축소"], "zoom", "w58")}${this.big(["100%"], "hundred", "w38")}${this.big(["선택 영역", "확대/축소"], "zoomsel", "w60")}
        </div><div class="gl">확대/축소</div></div>
        <div class="group"><div class="body">
          ${this.big(["새 창"], "newwin", "w42")}${this.big(["모두", "정렬"], "arrange", "w38")}${this.big(["틀", "고정"], "freeze", "w42", { arrow: true })}
          <div class="list">${this.small("나누기", "split")}${this.small("숨기기", "hide")}${this.small("숨기기 취소", "unhide", true)}</div>
          <span class="sep"></span>
          <div class="list">${this.small("나란히 보기", "side")}${this.small("동시 스크롤", "sync", true)}${this.small("창 위치 다시 정렬", "reset", true)}</div>
          <span class="sep"></span>
          ${this.big(["작업 영역", "저장"], "savews", "w60")}${this.big(["창", "전환"], "switchw", "w38", { arrow: true })}
        </div><div class="gl">창</div></div>
        <div class="group"><div class="body">${this.big(["매크로"], "macro", "w42", { alone: true })}</div><div class="gl">매크로</div></div>
      </section>
      <div class="fbar">
        <div class="namebox"><input aria-label="이름 상자" value="G20" /><button aria-label="이름 목록">${tri("#000")}</button></div>
        <div class="fx"><span class="dot"></span><span>f<i>x</i></span></div>
        <input class="formula" aria-label="수식 입력줄" value="가지나물" />
        <button class="expand" aria-label="수식 입력줄 확장"><svg width="8" height="10"><path d="M1 1l3 3 3-3M1 5l3 3 3-3" fill="none" stroke="#000" stroke-width="2" /></svg></button>
      </div>
      <div class="strip"></div>
      <main class="work">
        <div class="sheet">
          <table>
            <colgroup><col class="c0" /><col class="c1" />${names.slice(1, 8).map(() => html`<col class="cw" />`)}${names.slice(8).map(() => html`<col class="cn" />`)}<col /></colgroup>
            <thead><tr><th class="corner"><svg width="9" height="8"><path d="M9 0v8H0z" fill="#e2edfa" /></svg></th>
              ${names.map((n) => html`<th scope="col" class=${classMap({ on: n === "G", bar: n === "F", wipe: n === "H" })}>${n}</th>`)}<th></th></tr></thead>
            <tbody>
              <tr class="h26"><th scope="row">1</th><td class="name" colspan="8">${"주 간 식 단 표".split(" ").join("\u00a0\u00a0\u00a0\u00a0")}</td>${this.rest()}</tr>
              <tr class="h20"><th scope="row">2</th><td class="day"></td>
                ${HEAD_ROW.map((c, i) => html`<td class="day ${c.c ?? ""}">${c.t}${i === 1 ? html` <span class="red">말복</span>` : nothing}</td>`)}${this.rest("edge")}</tr>
              ${this.mealRows()}
              ${this.originRows()}
              <tr class="h17"><th scope="row">27</th><td class="note thick" colspan="7">* 고혈압- 저염식      당뇨식- 잡곡밥 *          * 상기 식단은 시장수급사정에 따라 달라질수 있습니다.</td>${this.rest("edgek")}</tr>
              ${[28, 29, 30, 31, 32, 33].map((r) => html`<tr class=${r === 28 ? "h22" : "h17"}><th scope="row">${r}</th>${Array.from({ length: 8 }, () => html`<td class=${r === 28 ? "cap" : ""}></td>`)}${this.rest()}</tr>`)}
            </tbody>
          </table>
          <div class="pv"></div><div class="ph"></div>
        </div>
        <div class="vs"><span class="split"></span><button aria-label="위로"><svg width="9" height="5"><path d="M0 5h9L4.5 0z" fill="#33425f" /></svg></button>
          <div class="vt"><svg width="7" height="8"><path d="M0 .5h7M0 2.5h7M0 4.5h7M0 6.5h7" stroke="#5c6b83" /></svg></div><span class="grow"></span>
          <button aria-label="아래로"><svg width="9" height="5"><path d="M0 0h9L4.5 5z" fill="#33425f" /></svg></button></div>
      </main>
      <div class="sheets">
        <div class="nav">
          <button aria-label="처음"><svg width="7" height="7"><path d="M.5 0v7" stroke="#15428b" /><path d="M6 0v7L2 3.5z" fill="#15428b" /></svg></button>
          <button aria-label="이전"><svg width="5" height="7"><path d="M4 0v7L0 3.5z" fill="#15428b" /></svg></button>
          <button aria-label="다음"><svg width="5" height="7"><path d="M0 0v7L4 3.5z" fill="#15428b" /></svg></button>
          <button aria-label="마지막"><svg width="7" height="7"><path d="M6.5 0v7" stroke="#15428b" /><path d="M1 0v7L5 3.5z" fill="#15428b" /></svg></button>
        </div>
        <button class="st z4">${tabShape("#cfe0f7")}<span>8월1주</span></button><button class="st z3">${tabShape("#cfe0f7")}<span>8월2주</span></button>
        <button class="st on">${tabShape("#fff")}<span>8월3주</span></button><button class="st">${tabShape("#cfe0f7")}<span>8월4주</span></button>
        <button class="st new" aria-label="워크시트 삽입"><svg width="44" height="15" viewBox="0 0 44 15"><path d="M.5 0V14.5H29L43 0" fill="#cfe0f7" stroke="#8aa7d4" /><path d="M15.5 4.5h9v7h-9z" fill="#e9f0fb" stroke="#6e86ae" /><path d="M14.5 1v8M10.5 5h8M12 2.5l5 5M17 2.5l-5 5" stroke="#e39a2b" /></svg></button>
        <span class="grow"></span>
        <div class="hs"><span class="hsplit"></span><button aria-label="왼쪽"><svg width="5" height="9"><path d="M5 0v9L0 4.5z" fill="#33425f" /></svg></button>
          <div class="ht"><svg width="8" height="7"><path d="M.5 0v7M2.5 0v7M4.5 0v7M6.5 0v7" stroke="#5c6b83" /></svg></div><span class="grow"></span>
          <button aria-label="오른쪽"><svg width="5" height="9"><path d="M0 0v9L5 4.5z" fill="#33425f" /></svg></button><span class="hsplit"></span></div>
      </div>
      <footer class="status">준비<span class="bar"></span><span class="grow"></span>
        <div class="sr"><div class="views">
          <button class="on" aria-label="기본"><svg width="13" height="11"><path d="M.5 .5h12v10H.5zM4.5 0v11M8.5 0v11M0 3.5h13M0 7.5h13" fill="#fff" stroke="#6b6250" /></svg></button>
          <button aria-label="페이지 레이아웃"><svg width="13" height="11"><path d="M.5 .5h12v10H.5z" fill="#8d97a8" stroke="#56627a" /><path d="M3.5 1.5h6v8h-6zM5 4h3M5 6h3" fill="#fff" stroke="#56627a" /></svg></button>
          <button aria-label="페이지 나누기"><svg width="13" height="11"><path d="M.5 .5h12v10H.5z" fill="#aab3c1" stroke="#56627a" /><path d="M1 1h4v6H1zM7 1h4v6H7z" fill="#fff" /><path d="M5.5 0v7H1M11.5 1v6H7" stroke="#56627a" fill="none" /></svg></button></div>
          <span class="pct">75%</span>
          <button aria-label="축소"><svg width="16" height="16"><circle cx="8" cy="8" r="7.3" fill="#e4edf8" stroke="#40567d" /><path d="M4.5 8h7" stroke="#40567d" stroke-width="2" /></svg></button>
          <input type="range" aria-label="확대/축소" min="0" max="100" value="36" />
          <button aria-label="확대"><svg width="16" height="16"><circle cx="8" cy="8" r="7.3" fill="#e4edf8" stroke="#40567d" /><path d="M4.5 8h7M8 4.5v7" stroke="#40567d" stroke-width="2" /></svg></button>
        </div>
      </footer>
      <div class="task">
        <button class="start" aria-label="시작"><svg width="38" height="38" viewBox="0 0 38 38"><defs><radialGradient id="s" cx=".5" cy=".9" r=".9"><stop offset="0" stop-color="#3fd0f4" /><stop offset=".5" stop-color="#1d6ca6" /><stop offset="1" stop-color="#1b3f66" /></radialGradient></defs>
          <circle cx="19" cy="19" r="17.5" fill="url(#s)" stroke="#1b3553" /><path d="M3 16a16.5 16.5 0 0 1 32 0c-8-5-22 4-32 0z" fill="#bcd3e6" opacity=".55" />
          <path d="M10 11c3-2 5-2 8 0l-2 8c-3-2-5-2-8 0z" fill="#e8622a" /><path d="M20 12c3 2 6 1 10 0l-3 8c-3 1-6 1-9 0z" fill="#8cc63f" /><path d="M8 21c3-2 5-2 8 0l-2 7c-3-2-5-2-8-1z" fill="#3f9fe8" /><path d="M17 21c4 2 7 1 10 0l-3 8c-3 1-6 1-9-1z" fill="#fcc630" /></svg></button>
        <button class="ie" aria-label="Internet Explorer"><svg width="32" height="32" viewBox="0 0 32 32"><path d="M26 22a10.500 10.500 0 1 1 1.500-5.500H10" fill="none" stroke="#2f9fe2" stroke-width="5" /><path d="M24 8a10 10 0 0 0-16 3" fill="none" stroke="#8fdcfa" stroke-width="2" /><path d="M7 29c-7 3-6-8 2-16S28-1 30 4c.3 2-.5 3-1 4" fill="none" stroke="#f5c21b" stroke-width="2.400" /></svg></button>
        <button class="app stack" aria-label="탐색기"><svg width="34" height="30" viewBox="0 0 34 30"><path d="M2 4l1-3h9l1 2h8l1 2h10v20H2z" fill="#f3d57c" stroke="#c79f3e" /><path d="M5 1h5v3H5z" fill="#3bb54a" /><path d="M13 3h4v3h-4z" fill="#d64a2c" /><path d="M22 5h5v3h-5z" fill="#3f88dd" /><path d="M2 8h30l-1 17H3z" fill="#fae9a9" /><path d="M6 29V19q0-2 2-2h18q3 0 3 3v9h-5v-6H11v6z" fill="#9fd4f2" stroke="#4b9ccb" /></svg></button>
        <button class="chrome" aria-label="Chrome"><svg width="30" height="30" viewBox="0 0 30 30"><circle cx="15" cy="15" r="14.5" fill="#fcc934" /><path d="M15 15L2.4 7.8A14.5 14.5 0 0 1 27.6 7.8z" fill="#db4437" /><path d="M15 15L2.4 7.8A14.5 14.5 0 0 0 14 29.4l6-11z" fill="#1e9e58" /><path d="M15 8h12.7q1.8 4 1.7 8l-8-2z" fill="#fcc934" /><circle cx="15" cy="15" r="6.8" fill="#fff" /><circle cx="15" cy="15" r="5.3" fill="#4285f4" /></svg></button>
        <button class="app stack" aria-label="Excel"><svg width="32" height="32" viewBox="0 0 32 32"><path d="M1 28V9L10 1h16v10" fill="none" stroke="#4ca52b" stroke-width="2" /><path d="M2 28V10l8-8h15v10" fill="#f7fbf5" /><path d="M4 8l26 2v20L4 26z" fill="#f2f5f1" stroke="#9fb09a" /><path d="M16 10l3.5.3v4H16zM21 11h3.5v4H21zM26 11h3v4h-3zM21 17h3.5v4H21zM26 17h3v4h-3zM5 20h4v4H5zM11 20h4v4h-4zM16 21h4v5h-4zM21 22h4v4h-4zM26 22h3v4h-3z" fill="#7cb668" /><path d="M7 9h4l2 4 3-4h3l-4 5 4 6h-4l-3-4-3 4H6l5-6z" fill="#23602a" /></svg></button>
        <button class="app doc" aria-label="문서"><svg width="24" height="28" viewBox="0 0 24 28"><path d="M1 1h15l7 7v19H1z" fill="#fdfdfd" stroke="#a5a5a5" /><path d="M16 1v7h7" fill="#e9e9e9" stroke="#a5a5a5" /></svg></button>
        <div class="tray">
          <div class="ime"><svg width="18" height="18" viewBox="0 0 18 18"><circle cx="8" cy="8" r="7" fill="#5a9fd6" /><path d="M2 4c4-4 8-1 6 3s-5 3-7 2zM9 8c3-1 6 0 5 2s-4 5-5 4z" fill="#4fa343" /><path d="M8 16l7-8 2 2-7 8z" fill="#f5c842" stroke="#86651a" stroke-width=".5" /></svg><span>가</span><span>漢</span></div>
          <div class="icons">
            <svg width="9" height="6"><path d="M0 6h9L4.5 0z" fill="#fff" stroke="#55647a" stroke-width=".5" /></svg>
            <svg class="flag" width="17" height="17" viewBox="0 0 17 17"><path d="M2 1v15" stroke="#fff" stroke-width="2" /><path d="M3 2c4-2 5 2 10 0v7c-4 2-6-2-10 0z" fill="#fff" /><circle cx="11.5" cy="11.5" r="5" fill="#d8262c" /><path d="M9.5 9.5l4 4M13.5 9.5l-4 4" stroke="#fff" stroke-width="1.5" /></svg>
            <svg width="16" height="16" viewBox="0 0 16 16"><path d="M4.5 4.5h10v8h-10z" fill="#5a6b82" stroke="#fff" stroke-width="1.5" /><path d="M7 15h7M9 13v2" stroke="#fff" stroke-width="1.5" /><path d="M1 1h4v4H1zM3 5v9" fill="#5a6b82" stroke="#fff" /></svg>
            <svg width="16" height="16" viewBox="0 0 16 16"><path d="M1 5h3l4-4v14l-4-4H1z" fill="#fff" /><path d="M10 5q2 3 0 6M12 3q4 5 0 10M14 1.5q4 6 0 13" fill="none" stroke="#fff" /></svg>
          </div>
          <div class="clock">오전 9:29<br />2016-08-22</div><button class="peek" aria-label="바탕 화면 보기"></button>
        </div>
      </div>`;
  }
}
